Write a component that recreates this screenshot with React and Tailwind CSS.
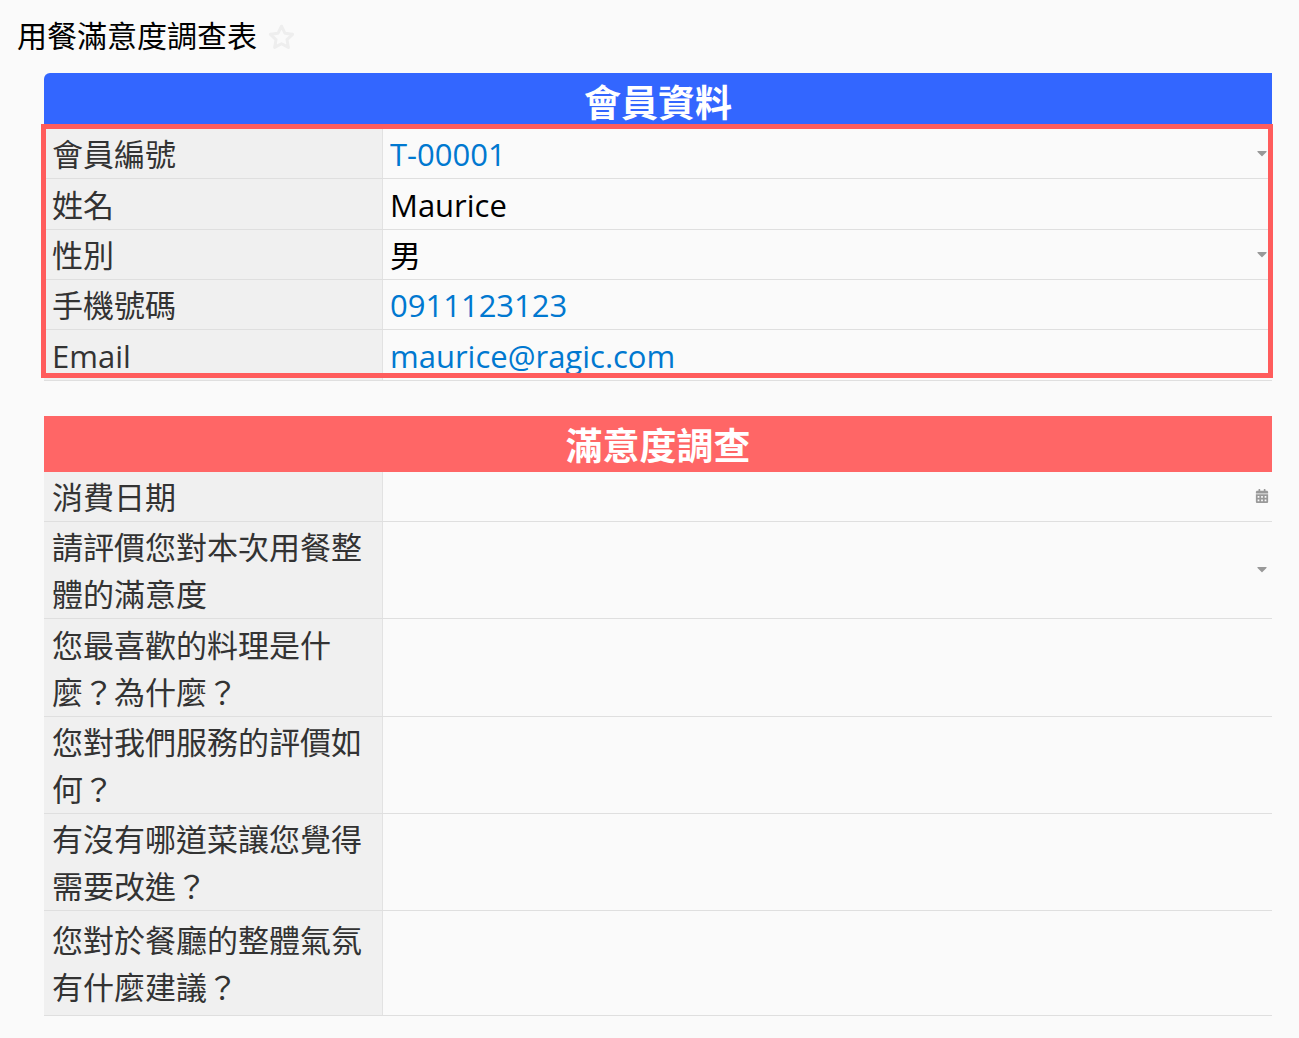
import { useState } from 'react'
import { FaCalendarAlt, FaCaretDown } from 'react-icons/fa'

const memberFields = [
  { id: 'member-no', label: '會員編號', type: 'select', value: 'T-00001', options: ['T-00001'], color: 'text-[#0078d0]' },
  { id: 'member-name', label: '姓名', type: 'text', value: 'Maurice', height: 'min-h-[51px]' },
  { id: 'member-gender', label: '性別', type: 'select', value: '男', options: ['男', '女'], color: 'text-black' },
  { id: 'member-phone', label: '手機號碼', type: 'link', value: '0911123123', href: 'tel:0911123123' },
  { id: 'member-email', label: 'Email', type: 'link', value: 'maurice@ragic.com', href: 'mailto:maurice@ragic.com', height: 'min-h-[51px]' },
]

const surveyFields = [
  { id: 'visit-date', label: '消費日期', type: 'date', value: '' },
  { id: 'satisfaction', label: '請評價您對本次用餐整體的滿意度', type: 'select', value: '', options: [''], color: 'text-black' },
  { id: 'favorite', label: '您最喜歡的料理是什麼？為什麼？', type: 'textarea', value: '', height: 'min-h-[98px]' },
  { id: 'service', label: '您對我們服務的評價如何？', type: 'textarea', value: '' },
  { id: 'improve', label: '有沒有哪道菜讓您覺得需要改進？', type: 'textarea', value: '' },
  { id: 'atmosphere', label: '您對於餐廳的整體氣氛有什麼建議？', type: 'textarea', value: '', height: 'min-h-[105px]' },
]

function StarIcon() {
  return (
    <svg viewBox="0 0 27 26" className="w-[27px] h-[26px]" fill="none" stroke="currentColor" strokeWidth="3" strokeLinejoin="round">
      <path d="M13.5 2.2 L16.9 9.2 L24.6 10.3 L19 15.7 L20.4 23.4 L13.5 19.7 L6.6 23.4 L8 15.7 L2.4 10.3 L10.1 9.2 Z" />
    </svg>
  )
}

function FieldControl({ field }) {
  const [value, setValue] = useState(field.value)
  const onChange = (e) => setValue(e.target.value)

  if (field.type === 'link') {
    return (
      <a id={field.id} href={field.href} className="text-[#0078d0]">
        {value}
      </a>
    )
  }

  if (field.type === 'select') {
    return (
      <>
        <select
          id={field.id}
          value={value}
          onChange={onChange}
          className={`w-full h-[47px] appearance-none bg-transparent outline-none ${field.color}`}
        >
          {field.options.map((option) => (
            <option key={option} value={option}>{option}</option>
          ))}
        </select>
        <FaCaretDown className="w-4 h-4 mb-1 shrink-0 text-[#999] pointer-events-none" />
      </>
    )
  }

  if (field.type === 'date') {
    return (
      <>
        <input id={field.id} type="text" value={value} onChange={onChange} className="w-full h-[47px] bg-transparent outline-none" />
        <button type="button" aria-label="選擇日期" className="w-4 mb-1 shrink-0 flex justify-center text-[#999]">
          <FaCalendarAlt className="w-[14px] h-[14px]" />
        </button>
      </>
    )
  }

  if (field.type === 'textarea') {
    return (
      <textarea id={field.id} rows={2} value={value} onChange={onChange} className="w-full h-[94px] bg-transparent outline-none resize-none" />
    )
  }

  return (
    <input id={field.id} type="text" value={value} onChange={onChange} className="w-full h-[47px] bg-transparent outline-none" />
  )
}

function FieldRow({ field }) {
  return (
    <div className={`flex border-b border-[#dfdfdf] text-[31px] leading-[47px] ${field.height || ''}`}>
      <div className="w-[339px] shrink-0 flex items-center bg-[#f0f0f0] border-r border-[#e2e2e2] px-2 pt-[2px] text-[#333]">
        <label htmlFor={field.id}>{field.label}</label>
      </div>
      <div className="flex-1 min-w-0 flex items-center pl-[7px] pr-[2px] pt-[2px] text-black">
        <FieldControl field={field} />
      </div>
    </div>
  )
}

function App() {
  const [starred, setStarred] = useState(false)

  return (
    <div className="min-h-screen bg-[#fafafa] font-['Open_Sans','Noto_Sans_CJK_TC',sans-serif]">
      {/* Sheet title */}
      <header className="flex items-center gap-[11px] pl-[17px] pt-px pb-1 h-[73px]">
        <h1 className="text-[30px] leading-[47px] text-black">用餐滿意度調查表</h1>
        <button
          type="button"
          aria-label="加入最愛"
          aria-pressed={starred}
          onClick={() => setStarred(!starred)}
          className="pt-1 text-[#eee]"
        >
          <StarIcon />
        </button>
      </header>

      <main className="ml-11 mr-[27px] space-y-[35px] pb-[22px]">
        {/* Member info */}
        <section className="relative">
          <h2 className="h-14 rounded-tl-md bg-[#3366ff] text-white text-center text-[37px] leading-[60px] font-bold">
            會員資料
          </h2>
          {memberFields.map((field) => (
            <FieldRow key={field.id} field={field} />
          ))}
          {/* Highlight frame */}
          <div className="absolute top-[51px] bottom-[3px] -left-[3px] -right-px border-5 border-[#ff5c5c] pointer-events-none" />
        </section>

        {/* Survey */}
        <section>
          <h2 className="h-14 bg-[#ff6666] text-white text-center text-[37px] leading-[60px] font-bold">
            滿意度調查
          </h2>
          {surveyFields.map((field) => (
            <FieldRow key={field.id} field={field} />
          ))}
        </section>
      </main>
    </div>
  )
}

export default App
